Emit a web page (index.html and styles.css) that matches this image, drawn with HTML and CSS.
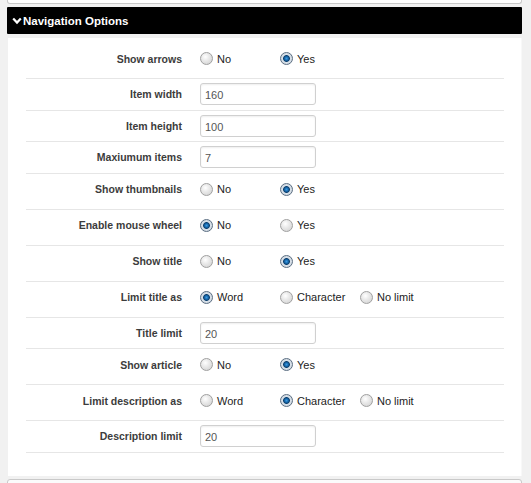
FILE: index.html
```html
<!DOCTYPE html>
<html>
<head>
<meta charset="utf-8">
<link rel="stylesheet" href="styles.css">
</head>
<body>
<div class="prev"></div>
<div class="header">
  <svg class="chev" width="10" height="8" viewBox="0 0 10 8"><path d="M1.2 1.5 L5 5.6 L8.8 1.5" fill="none" stroke="#fff" stroke-width="2.2"/></svg>
  <span>Navigation Options</span>
</div>
<div class="panel">
  <div class="row r"><div class="lbl">Show arrows</div>
    <label class="opt"><input type="radio" name="a"><span>No</span></label>
    <label class="opt"><input type="radio" name="a" checked><span>Yes</span></label></div>
  <div class="row i"><div class="lbl">Item width</div><input class="txt" type="text" value="160"></div>
  <div class="row i"><div class="lbl">Item height</div><input class="txt" type="text" value="100"></div>
  <div class="row i"><div class="lbl">Maxiumum items</div><input class="txt" type="text" value="7"></div>
  <div class="row r"><div class="lbl">Show thumbnails</div>
    <label class="opt"><input type="radio" name="b"><span>No</span></label>
    <label class="opt"><input type="radio" name="b" checked><span>Yes</span></label></div>
  <div class="row r"><div class="lbl">Enable mouse wheel</div>
    <label class="opt"><input type="radio" name="c" checked><span>No</span></label>
    <label class="opt"><input type="radio" name="c"><span>Yes</span></label></div>
  <div class="row r"><div class="lbl">Show title</div>
    <label class="opt"><input type="radio" name="d"><span>No</span></label>
    <label class="opt"><input type="radio" name="d" checked><span>Yes</span></label></div>
  <div class="row r"><div class="lbl">Limit title as</div>
    <label class="opt"><input type="radio" name="e" checked><span>Word</span></label>
    <label class="opt"><input type="radio" name="e"><span>Character</span></label>
    <label class="opt"><input type="radio" name="e"><span>No limit</span></label></div>
  <div class="row i"><div class="lbl">Title limit</div><input class="txt" type="text" value="20"></div>
  <div class="row r"><div class="lbl">Show article</div>
    <label class="opt"><input type="radio" name="f"><span>No</span></label>
    <label class="opt"><input type="radio" name="f" checked><span>Yes</span></label></div>
  <div class="row r"><div class="lbl">Limit description as</div>
    <label class="opt"><input type="radio" name="g"><span>Word</span></label>
    <label class="opt"><input type="radio" name="g" checked><span>Character</span></label>
    <label class="opt"><input type="radio" name="g"><span>No limit</span></label></div>
  <div class="row i"><div class="lbl">Description limit</div><input class="txt" type="text" value="20"></div>
</div>
<div class="next"></div>
</body>
</html>
```
FILE: styles.css
```css
html, body {
  margin: 0;
  padding: 0;
  background: #f1f1f1;
  font-family: "Liberation Sans", Arial, sans-serif;
  overflow: hidden;
}
.prev {
  margin-left: 7px;
  width: 513px;
  height: 3px;
  background: #fff;
  border: 1px solid #c9c9c9;
  border-top: 0;
  border-radius: 0 0 3px 3px;
  margin-bottom: 3px;
}
.header {
  margin-left: 7px;
  width: 515px;
  height: 27px;
  background: #000;
  border-radius: 1px;
  display: flex;
  align-items: center;
  color: #fff;
  font-weight: bold;
  font-size: 11.5px;
  box-sizing: border-box;
  padding-left: 5px;
}
.chev {
  margin-right: 1px;
  margin-top: 0;
}
.panel {
  margin-left: 8px;
  margin-top: 4px;
  width: 513px;
  height: 438px;
  background: #fff;
  box-sizing: border-box;
  padding-top: 5px;
  box-shadow: 1px 0 0 #f8f8f8;
}
.row {
  display: flex;
  align-items: center;
  margin: 0 17px 0 18px;
  border-bottom: 1px solid #e6e6e6;
  box-sizing: border-box;
}
.row.r { height: 36px; padding-bottom: 4px; }
.row.i { height: 31.5px; }
.lbl {
  width: 174px;
  box-sizing: border-box;
  padding-right: 18px;
  text-align: right;
  font-weight: bold;
  font-size: 10.5px;
  color: #3c3c3c;
  flex: none;
}
.opt {
  width: 80px;
  display: flex;
  align-items: center;
  font-size: 11px;
  color: #222;
  flex: none;
}
.opt span { margin-left: 4px; }
.opt input {
  -webkit-appearance: none;
  appearance: none;
  margin: 0;
  width: 13px;
  height: 13px;
  border-radius: 50%;
  border: 1px solid #a0a0a0;
  box-sizing: border-box;
  background: radial-gradient(circle at 40% 35%, #ffffff 0, #ececec 35%, #cdcdcd 100%);
  flex: none;
}
.opt input:checked {
  border-color: #5b6e82;
  background: radial-gradient(circle at 50% 50%, #3d9be0 0, #1a6fb5 1.6px, #0b3f6e 3px, #d9e1e9 3.8px, #c6cfd8 100%);
}
.txt {
  width: 116px;
  height: 22px;
  box-sizing: border-box;
  border: 1px solid #d0d0d0;
  border-radius: 3px;
  box-shadow: inset 0 1px 2px rgba(0,0,0,0.07);
  background: #fff;
  font-family: "Liberation Sans", Arial, sans-serif;
  font-size: 11px;
  color: #555;
  padding: 2px 4px 0;
  margin: 0;
  outline: none;
}
.next {
  margin-left: 7px;
  margin-top: 3px;
  width: 513px;
  height: 10px;
  background: #fbfbfb;
  border: 1px solid #c9c9c9;
  border-radius: 3px 3px 0 0;
}
```
